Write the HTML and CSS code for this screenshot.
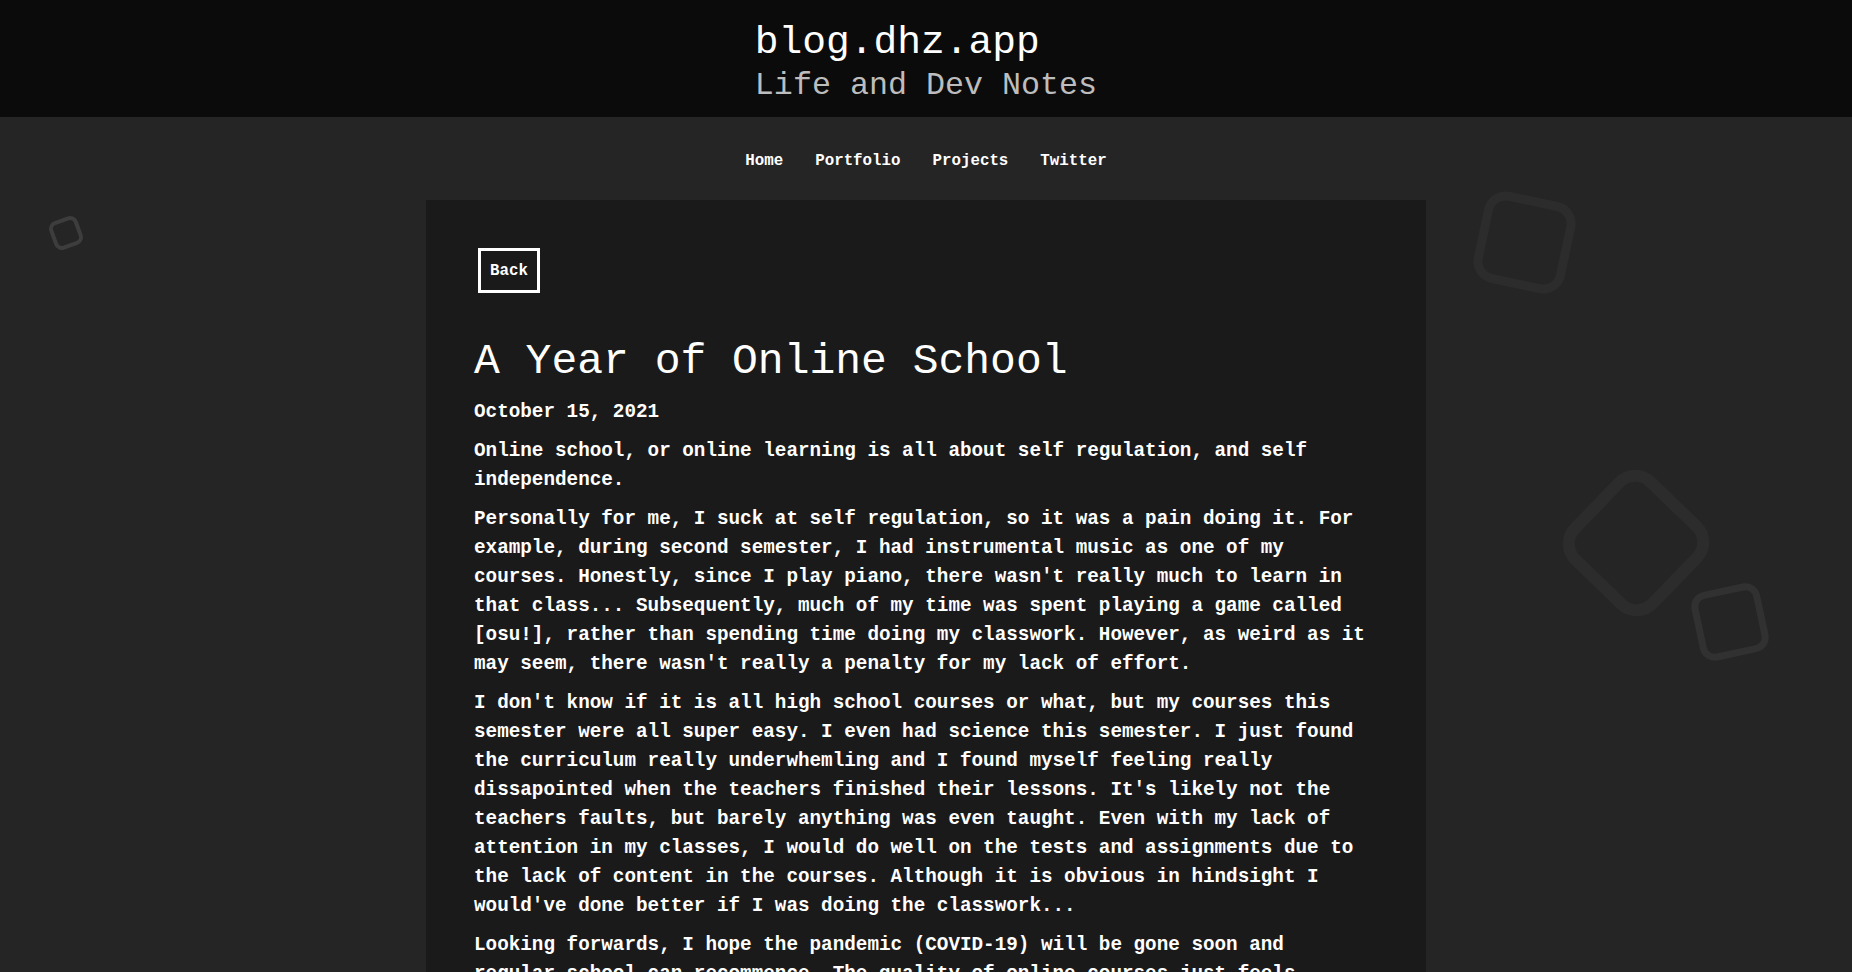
FILE: index.html
```html
<!DOCTYPE html>
<html lang="en">
<head>
<meta charset="utf-8">
<title>A Year of Online School - blog.dhz.app</title>
<link rel="stylesheet" href="styles.css">
</head>
<body>
<div class="page">
  <div class="deco deco-a"></div>
  <div class="deco deco-b"></div>
  <div class="deco deco-c"></div>
  <div class="deco deco-d"></div>

  <header class="site-header">
    <div class="brand">
      <div class="brand-title">blog.dhz.app</div>
      <div class="brand-sub">Life and Dev Notes</div>
    </div>
  </header>

  <nav class="site-nav">
    <a href="#">Home</a>
    <a href="#">Portfolio</a>
    <a href="#">Projects</a>
    <a href="#">Twitter</a>
  </nav>

  <main class="card">
    <a class="back" href="#">Back</a>
    <h1 class="post-title">A Year of Online School</h1>
    <p class="post-date">October 15, 2021</p>
    <p>Online school, or online learning is all about self regulation, and self independence.</p>
    <p>Personally for me, I suck at self regulation, so it was a pain doing it. For example, during second semester, I had instrumental music as one of my courses. Honestly, since I play piano, there wasn't really much to learn in that class... Subsequently, much of my time was spent playing a game called [osu!], rather than spending time doing my classwork. However, as weird as it may seem, there wasn't really a penalty for my lack of effort.</p>
    <p>I don't know if it is all high school courses or what, but my courses this semester were all super easy. I even had science this semester. I just found the curriculum really underwhemling and I found myself feeling really dissapointed when the teachers finished their lessons. It's likely not the teachers faults, but barely anything was even taught. Even with my lack of attention in my classes, I would do well on the tests and assignments due to the lack of content in the courses. Although it is obvious in hindsight I would've done better if I was doing the classwork...</p>
    <p>Looking forwards, I hope the pandemic (COVID-19) will be gone soon and regular school can recommence. The quality of online courses just feels lacking compared to learning in person.</p>
  </main>
</div>
</body>
</html>
```

FILE: styles.css
```css
html, body {
  margin: 0;
  padding: 0;
}

body {
  background: #252525;
  color: #ffffff;
  font-family: "Liberation Mono", "DejaVu Sans Mono", monospace;
}

.page {
  position: relative;
  min-height: 972px;
  overflow: hidden;
}

/* Decorative rounded squares */
.deco {
  position: absolute;
  box-sizing: border-box;
  pointer-events: none;
}

.deco-a {
  left: 51px;
  top: 218px;
  width: 30px;
  height: 30px;
  border: 4px solid #3d3d3d;
  border-radius: 8px;
  transform: rotate(-20deg);
}

.deco-b {
  left: 1478px;
  top: 196px;
  width: 93px;
  height: 93px;
  border: 9px solid #2c2c2c;
  border-radius: 22px;
  transform: rotate(12deg);
}

.deco-c {
  left: 1576px;
  top: 483px;
  width: 120px;
  height: 120px;
  border: 12px solid #2c2c2c;
  border-radius: 28px;
  transform: rotate(44deg);
}

.deco-d {
  left: 1695px;
  top: 587px;
  width: 70px;
  height: 70px;
  border: 7px solid #313131;
  border-radius: 15px;
  transform: rotate(-12deg);
}

/* Header */
.site-header {
  position: relative;
  background: #0b0b0b;
  height: 117px;
  box-sizing: border-box;
  padding-top: 21px;
  display: flex;
  justify-content: center;
}

.brand-title {
  font-size: 39.6px;
  line-height: 44px;
  color: #ffffff;
}

.brand-sub {
  font-size: 31.7px;
  line-height: 36px;
  margin-top: 3px;
  color: #bdbdbd;
}

/* Nav */
.site-nav {
  position: relative;
  display: flex;
  justify-content: center;
  gap: 32px;
  padding: 34px 0 29px;
}

.site-nav a {
  color: #ffffff;
  text-decoration: none;
  font-size: 15.8px;
  line-height: 20px;
  font-weight: 700;
}

/* Card */
.card {
  position: relative;
  display: block;
  width: 1000px;
  box-sizing: border-box;
  margin: 0 auto;
  padding: 48px 52px 48px 48px;
  background: #1a1a1a;
  min-height: 800px;
}

.back {
  display: inline-block;
  margin-left: 4px;
  border: 3px solid #ffffff;
  padding: 11px 9px 9px;
  color: #ffffff;
  text-decoration: none;
  font-size: 15.8px;
  line-height: 19px;
  font-weight: 700;
}

.post-title {
  margin: 43px 0 10px;
  font-size: 43px;
  line-height: 52px;
  font-weight: 400;
}

.card p {
  margin: 0 0 10px;
  font-size: 19.3px;
  line-height: 29px;
  font-weight: 700;
}

.card .post-date {
  margin-bottom: 10px;
}
```
